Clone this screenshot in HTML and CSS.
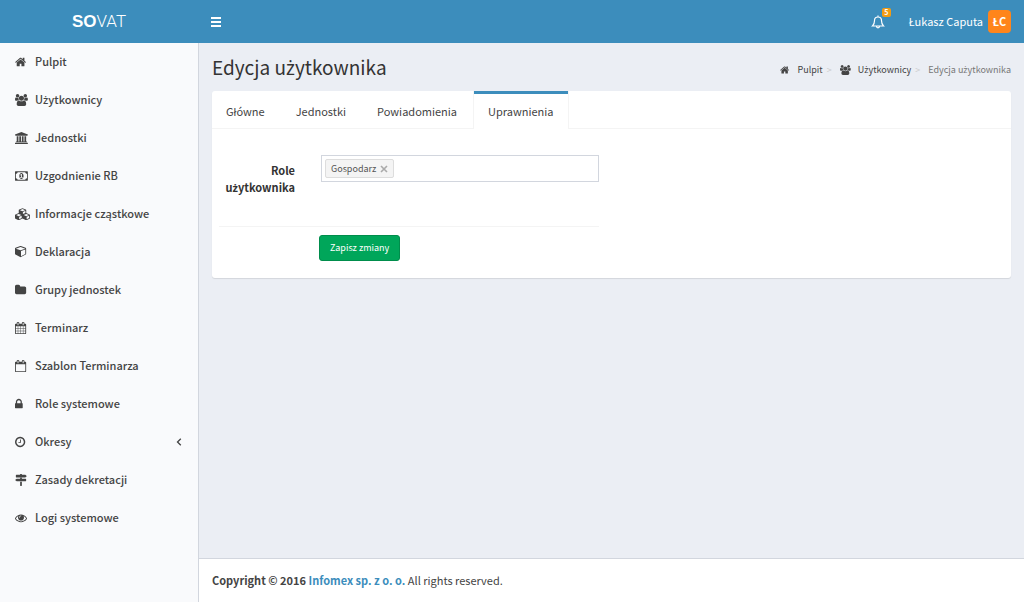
FILE: index.html
```html
<!DOCTYPE html>
<html lang="pl">
<head>
<meta charset="utf-8">
<title>SOVAT – Edycja użytkownika</title>
<meta name="viewport" content="width=device-width, initial-scale=1">
<link rel="stylesheet" href="styles.css">
</head>
<body>
<svg class="sprite" aria-hidden="true">
  <symbol id="home" viewBox="64 0 1792 1792" preserveAspectRatio="xMinYMid"><path d="M1472 992v480q0 26-19 45t-45 19h-384v-384h-256v384h-384q-26 0-45-19t-19-45v-480q0-1 .5-3t.5-3l575-474 575 474q1 2 1 6zm223-69l-62 74q-8 9-21 11h-3q-13 0-21-7l-692-577-692 577q-12 8-24 7-13-2-21-11l-62-74q-8-10-7-23.5t11-21.5l719-599q32-26 76-26t76 26l244 204v-195q0-14 9-23t23-9h192q14 0 23 9t9 23v408l219 182q10 8 11 21.5t-7 23.5z"/></symbol>
  <symbol id="users" viewBox="0 0 1920 1792" preserveAspectRatio="xMinYMid"><path d="M593 896q-162 5-265 128h-134q-82 0-138-40.5t-56-118.5q0-353 124-353 6 0 43.5 21t97.5 42.5 119 21.5q67 0 133-23-5 37-5 66 0 159 90 256zm1071 637q0 120-73 189.5t-194 69.5h-874q-121 0-194-69.5t-73-189.5q0-53 3.5-103.5t14-109 26.5-108.5 43-97.5 62-81 85.5-53.5 111.5-20q10 0 43 21.5t73 48 107 48 135 21.5 135-21.5 107-48 73-48 43-21.5q61 0 111.5 20t85.5 53.5 62 81 43 97.5 26.5 108.5 14 109 3.5 103.5zm-1024-1277q0 106-75 181t-181 75-181-75-75-181 75-181 181-75 181 75 75 181zm704 384q0 159-112.5 271.5t-271.5 112.5-271.5-112.5-112.5-271.5 112.5-271.5 271.5-112.5 271.5 112.5 112.5 271.5zm576 225q0 78-56 118.5t-138 40.5h-134q-103-123-265-128 90-97 90-256 0-29-5-66 66 23 133 23 59 0 119-21.5t97.5-42.5 43.5-21q124 0 124 353zm-128-609q0 106-75 181t-181 75-181-75-75-181 75-181 181-75 181 75 75 181z"/></symbol>
  <symbol id="bank" viewBox="0 0 1920 1792" preserveAspectRatio="xMinYMid"><path d="M960 0l960 384v128h-128q0 26-20.500 45t-48.500 19h-1526q-28 0-48.500-19t-20.500-45h-128v-128zM256 640h256v768h128v-768h256v768h128v-768h256v768h128v-768h256v768h59q28 0 48.500 19t20.500 45v64h-1664v-64q0-26 20.500-45t48.500-19h59zM1851 1600q28 0 48.500 19t20.500 45v128h-1920v-128q0-26 20.500-45t48.500-19z"/></symbol>
  <symbol id="money" viewBox="0 0 1920 1792" preserveAspectRatio="xMinYMid"><path fill-rule="evenodd" d="M64 192h1792q64 0 64 64v1280q0 64-64 64h-1792q-64 0-64-64v-1280q0-64 64-64zM384 320q0 106-75 181t-181 75v640q106 0 181 75t75 181h1152q0-106 75-181t181-75v-640q-106 0-181-75t-75-181zM960 448c200 0 320 200 320 448s-120 448-320 448-320-200-320-448 120-448 320-448zM768 1152h384v-96h-128v-448h-114l-148 137 77 80 57-53v284h-128z"/></symbol>
  <symbol id="cubes" viewBox="0 0 2304 1792" preserveAspectRatio="xMinYMid"><path fill-rule="evenodd" d="M1152 0l500 214q76 34 76 120v420l500 214q76 34 76 120v416q0 76-68 114l-448 224q-60 28-116 0l-520-260-520 260q-56 28-116 0l-448-224q-68-38-68-114v-416q0-86 76-120l500-214v-420q0-86 76-120zM1152 138l-394 169 394 169 394-169zM1216 570v345l384-164v-350zM576 892l-394 169 394 169 394-169zM640 1324v372l384-192v-345zM1728 892l-394 169 394 169 394-169zM1792 1324v372l384-192v-345z"/></symbol>
  <symbol id="cube" viewBox="64 0 1792 1792" preserveAspectRatio="xMinYMid"><path fill-rule="evenodd" d="M896 10q24 0 46 8l704 256q82 30 82 120v768q0 76-66 112l-704 384q-62 30-124 0l-704-384q-66-36-66-112v-768q0-90 82-120l704-256q22-8 46-8zM896 138l-698 254 698 254 698-254zM960 758v771l640-349v-655z"/></symbol>
  <symbol id="folder" viewBox="64 0 1792 1792" preserveAspectRatio="xMinYMid"><path d="M1728 608v704q0 92-66 158t-158 66h-1216q-92 0-158-66t-66-158v-960q0-92 66-158t158-66h320q92 0 158 66t66 158v32h672q92 0 158 66t66 158z"/></symbol>
  <symbol id="calendar" viewBox="64 0 1792 1792" preserveAspectRatio="xMinYMid"><path fill-rule="evenodd" d="M192 256h128v-96q0-160 160-160h64q160 0 160 160v96h384v-96q0-160 160-160h64q160 0 160 160v96h128q128 0 128 128v1280q0 128-128 128h-1408q-128 0-128-128v-1280q0-128 128-128zM480 128q-32 0-32 32v288q0 32 32 32h64q32 0 32-32v-288q0-32-32-32zM1248 128q-32 0-32 32v288q0 32 32 32h64q32 0 32-32v-288q0-32-32-32zM192 640v288h288v-288zM544 640v288h320v-288zM928 640v288h320v-288zM1312 640v288h288v-288zM192 992v320h288v-320zM544 992v320h320v-320zM928 992v320h320v-320zM1312 992v320h288v-320zM192 1376v288h288v-288zM544 1376v288h320v-288zM928 1376v288h320v-288zM1312 1376v288h288v-288z"/></symbol>
  <symbol id="calendar-blank" viewBox="64 0 1792 1792" preserveAspectRatio="xMinYMid"><path fill-rule="evenodd" d="M192 256h128v-96q0-160 160-160h64q160 0 160 160v96h384v-96q0-160 160-160h64q160 0 160 160v96h128q128 0 128 128v1280q0 128-128 128h-1408q-128 0-128-128v-1280q0-128 128-128zM480 128q-32 0-32 32v288q0 32 32 32h64q32 0 32-32v-288q0-32-32-32zM1248 128q-32 0-32 32v288q0 32 32 32h64q32 0 32-32v-288q0-32-32-32zM192 640v1024h1408v-1024z"/></symbol>
  <symbol id="lock" viewBox="320 0 1792 1792" preserveAspectRatio="xMinYMid"><path d="M640 768h512v-192q0-106-75-181t-181-75-181 75-75 181v192zm832 96v576q0 40-28 68t-68 28h-960q-40 0-68-28t-28-68v-576q0-40 28-68t68-28h32v-192q0-184 132-316t316-132 316 132 132 316v192h32q40 0 68 28t28 68z"/></symbol>
  <symbol id="clock" viewBox="128 0 1792 1792" preserveAspectRatio="xMinYMid"><path d="M1024 544v448q0 14-9 23t-23 9h-320q-14 0-23-9t-9-23v-64q0-14 9-23t23-9h224v-352q0-14 9-23t23-9h64q14 0 23 9t9 23zm416 352q0-148-73-273t-198-198-273-73-273 73-198 198-73 273 73 273 198 198 273 73 273-73 198-198 73-273zm224 0q0 209-103 385.5t-279.5 279.5-385.5 103-385.5-103-279.5-279.5-103-385.5 103-385.5 279.5-279.5 385.5-103 385.5 103 279.5 279.5 103 385.5z"/></symbol>
  <symbol id="signs" viewBox="0 0 1792 1792" preserveAspectRatio="xMinYMid"><path d="M768 0h256v128h512l210 160q24 32 0 64l-210 160h-1344q-64 0-64-64v-256q0-64 64-64h576zM768 576h256v128h576q64 0 64 64v256q0 64-64 64h-1344l-210-160q-24-32 0-64l210-160h512zM768 1152h256v576q0 64-64 64h-128q-64 0-64-64z"/></symbol>
  <symbol id="eye" viewBox="0 0 1792 1792" preserveAspectRatio="xMinYMid"><path d="M1664 960q-152-236-381-353 61 104 61 225 0 185-131.500 316.500t-316.500 131.500-316.500-131.500-131.500-316.500q0-121 61-225-229 117-381 353 133 205 333.500 326.500t434.500 121.500 434.500-121.500 333.500-326.500zm-720-384q0-20-14-34t-34-14q-125 0-214.500 89.500t-89.500 214.500q0 20 14 34t34 14 34-14 14-34q0-86 61-147t147-61q20 0 34-14t14-34zm848 384q0 34-20 69-140 230-376.500 368.500t-499.500 138.500-499.500-139-376.500-368q-20-35-20-69t20-69q140-229 376.500-368t499.500-139 499.500 139 376.500 368q20 35 20 69z"/></symbol>
</svg>

<header class="topbar">
  <a class="logo" href="#"><b>SO</b><span>VAT</span></a>
  <button class="menu-toggle" type="button" aria-label="Menu">
    <svg width="12" height="12" viewBox="0 0 12 12"><path d="M1 2h10M1 6h10M1 10h10" stroke="currentColor" stroke-width="2"/></svg>
  </button>
  <nav class="topnav" aria-label="Konto">
    <button class="bell" type="button" aria-label="Powiadomienia">
      <svg class="outline" width="14" height="14" viewBox="0 0 14 14"><path d="M7 .5v1.300M1.500 11h11C10.800 9.500 10.500 8 10.500 5.600 10.500 3.300 9 2 7 2S3.500 3.300 3.500 5.600C3.500 8 3.200 9.500 1.500 11zM5.500 11.300c0 2 3 2 3 0" stroke-width="1.200"/></svg>
      <span class="badge">5</span>
    </button>
    <a class="account" href="#"><span>Łukasz Caputa</span><span class="avatar">ŁC</span></a>
  </nav>
</header>

<div class="shell">
  <aside class="sidebar">
    <nav aria-label="Menu główne">
      <ul class="menu">
        <li><a href="#"><svg class="icon"><use href="#home"/></svg>Pulpit</a></li>
        <li><a href="#"><svg class="icon"><use href="#users"/></svg><span>U<span class="dotted">ż</span>ytkownicy</span></a></li>
        <li><a href="#"><svg class="icon"><use href="#bank"/></svg>Jednostki</a></li>
        <li><a href="#"><svg class="icon"><use href="#money"/></svg>Uzgodnienie RB</a></li>
        <li><a href="#"><svg class="icon"><use href="#cubes"/></svg>Informacje cząstkowe</a></li>
        <li><a href="#"><svg class="icon"><use href="#cube"/></svg>Deklaracja</a></li>
        <li><a href="#"><svg class="icon"><use href="#folder"/></svg>Grupy jednostek</a></li>
        <li><a href="#"><svg class="icon"><use href="#calendar"/></svg>Terminarz</a></li>
        <li><a href="#"><svg class="icon"><use href="#calendar-blank"/></svg>Szablon Terminarza</a></li>
        <li><a href="#"><svg class="icon"><use href="#lock"/></svg>Role systemowe</a></li>
        <li><a href="#"><svg class="icon"><use href="#clock"/></svg>Okresy<svg class="chevron outline" width="6" height="8" viewBox="0 0 6 8"><path d="M4.800 .7L1.500 4l3.300 3.300" stroke-width="1.300"/></svg></a></li>
        <li><a href="#"><svg class="icon"><use href="#signs"/></svg>Zasady dekretacji</a></li>
        <li><a href="#"><svg class="icon"><use href="#eye"/></svg>Logi systemowe</a></li>
      </ul>
    </nav>
  </aside>

  <div class="content">
    <main class="main">
      <div class="page-head">
        <h1>Edycja u<span class="dotted">ż</span>ytkownika</h1>
        <ol class="breadcrumb">
          <li><a href="#"><svg class="crumb-icon"><use href="#home"/></svg>Pulpit</a></li>
          <li><a href="#"><svg class="crumb-icon"><use href="#users"/></svg><span>U<span class="dotted">ż</span>ytkownicy</span></a></li>
          <li class="current"><span>Edycja u<span class="dotted">ż</span>ytkownika</span></li>
        </ol>
      </div>
      <section class="panel">
        <ul class="tabs">
          <li><a href="#">Główne</a></li>
          <li><a href="#">Jednostki</a></li>
          <li><a href="#">Powiadomienia</a></li>
          <li><a class="active" href="#">Uprawnienia</a></li>
        </ul>
        <form class="form">
          <div class="field-row">
            <label for="roles">Role <span>u<span class="dotted">ż</span>ytkownika</span></label>
            <div class="tag-input">
              <span class="tag">Gospodarz<button type="button" aria-label="Usuń"><svg width="8" height="8" viewBox="0 0 8 8"><path d="M1 1l6 6M7 1L1 7" stroke="currentColor" stroke-width="1.600"/></svg></button></span>
              <input id="roles" type="text">
            </div>
          </div>
          <div class="actions"><button class="save" type="submit">Zapisz zmiany</button></div>
        </form>
      </section>
    </main>
    <footer class="footer"><strong>Copyright © 2016 <a href="#">Infomex sp. z o. o.</a></strong> All rights reserved.</footer>
  </div>
</div>
</body>
</html>
```

FILE: styles.css
```css
* { box-sizing: border-box; }

body {
  margin: 0;
  min-height: 100vh;
  display: flex;
  flex-direction: column;
  font: 11px/17px "Noto Sans CJK SC", "Noto Sans", sans-serif;
  color: #333;
  background: #ebeef4;
}

a { color: inherit; text-decoration: none; }
ul, ol { margin: 0; padding: 0; list-style: none; }
button { font: inherit; color: inherit; background: none; border: 0; padding: 0; cursor: pointer; }
svg { fill: currentColor; flex: none; }
.outline { fill: none; stroke: currentColor; }
.sprite { position: absolute; width: 0; height: 0; }

.dotted { font-family: "Noto Sans", sans-serif; line-height: 1; }

.topbar {
  display: flex;
  align-items: center;
  height: 43px;
  color: #fff;
  background: #3c8dbc;
}
.logo {
  width: 198px;
  text-align: center;
  font: 17px/43px "Liberation Sans", Arial, sans-serif;
}
.logo span { font-family: Roboto, sans-serif; font-weight: 300; }
.menu-toggle { display: flex; padding: 12px; }
.topnav { display: flex; align-items: center; gap: 24px; margin-left: auto; padding-right: 13px; }
.bell { position: relative; display: flex; }
.badge {
  position: absolute;
  top: -7px;
  left: 11px;
  width: 9px;
  border-radius: 2px;
  background: #f39c12;
  font-size: 7px;
  font-weight: 700;
  line-height: 9px;
  text-align: center;
}
.account { display: flex; align-items: center; gap: 5px; }
.avatar {
  width: 23px;
  border-radius: 4px;
  background: #ff851b;
  font-weight: 700;
  line-height: 23px;
  text-align: center;
}

.shell { flex: 1; display: flex; }
.sidebar { width: 199px; flex: none; background: #f9fafc; border-right: 1px solid #d2d6de; }
.menu a {
  display: flex;
  align-items: center;
  height: 38px;
  padding: 0 16px 1px 15px;
  font-weight: 500;
  color: #444;
}
.icon { width: 15px; height: 12px; margin-right: 5px; }
.chevron { margin-left: auto; }

.content { flex: 1; min-width: 0; display: flex; flex-direction: column; }
.main { flex: 1; padding: 13px; }
.page-head { display: flex; justify-content: space-between; align-items: flex-end; margin-bottom: 11px; }
h1 { margin: 0; padding-bottom: 2px; font-size: 19px; font-weight: 400; line-height: 22px; }
.breadcrumb { display: flex; font-size: 9px; line-height: 20px; color: #777; }
.breadcrumb li { display: flex; align-items: center; }
.breadcrumb li + li::before { content: ">"; padding: 0 8px 0 4px; color: #ccc; }
.breadcrumb a { display: flex; align-items: center; color: #444; }
.crumb-icon { width: 11px; height: 10px; margin-right: 7px; }

.panel { background: #fff; border-radius: 3px; box-shadow: 0 1px 1px rgba(0, 0, 0, .1); }
.tabs { display: flex; gap: 3px; border-bottom: 1px solid #f4f4f4; }
.tabs a {
  display: block;
  margin-bottom: -1px;
  padding: 9px 14px;
  border-top: 3px solid transparent;
  color: #444;
}
.tabs .active {
  background: #fff;
  border-top-color: #3c8dbc;
  box-shadow: 1px 0 #f4f4f4, -1px 0 #f4f4f4;
}
.form { width: 50%; padding: 26px 13px 17px 7px; }
.field-row {
  display: grid;
  grid-template-columns: 76px 1fr;
  gap: 26px;
  padding-bottom: 30px;
  border-bottom: 1px solid #f4f4f4;
}
.field-row label { padding-top: 7px; font-weight: 700; text-align: right; }
.tag-input {
  display: flex;
  align-self: start;
  align-items: center;
  height: 27px;
  padding: 3px;
  border: 1px solid #d2d6de;
}
.tag {
  display: flex;
  align-items: center;
  gap: 4px;
  padding: 0 5px;
  border: 1px solid #ddd;
  border-radius: 2px;
  background: #f4f4f4;
  color: #555;
  font-size: 9px;
}
.tag button { display: flex; color: #aaa; }
.tag-input input { flex: 1; min-width: 0; border: 0; outline: 0; font: inherit; background: none; }
.actions { padding: 8px 0 0 100px; }
.save {
  padding: 4px 10px;
  border: 1px solid #008d4c;
  border-radius: 3px;
  background: #00a65a;
  color: #fff;
  font-size: 9px;
  line-height: 16px;
}

.footer {
  padding: 13px;
  border-top: 1px solid #d2d6de;
  background: #fff;
  color: #444;
}
.footer a { color: #3c8dbc; }
```
